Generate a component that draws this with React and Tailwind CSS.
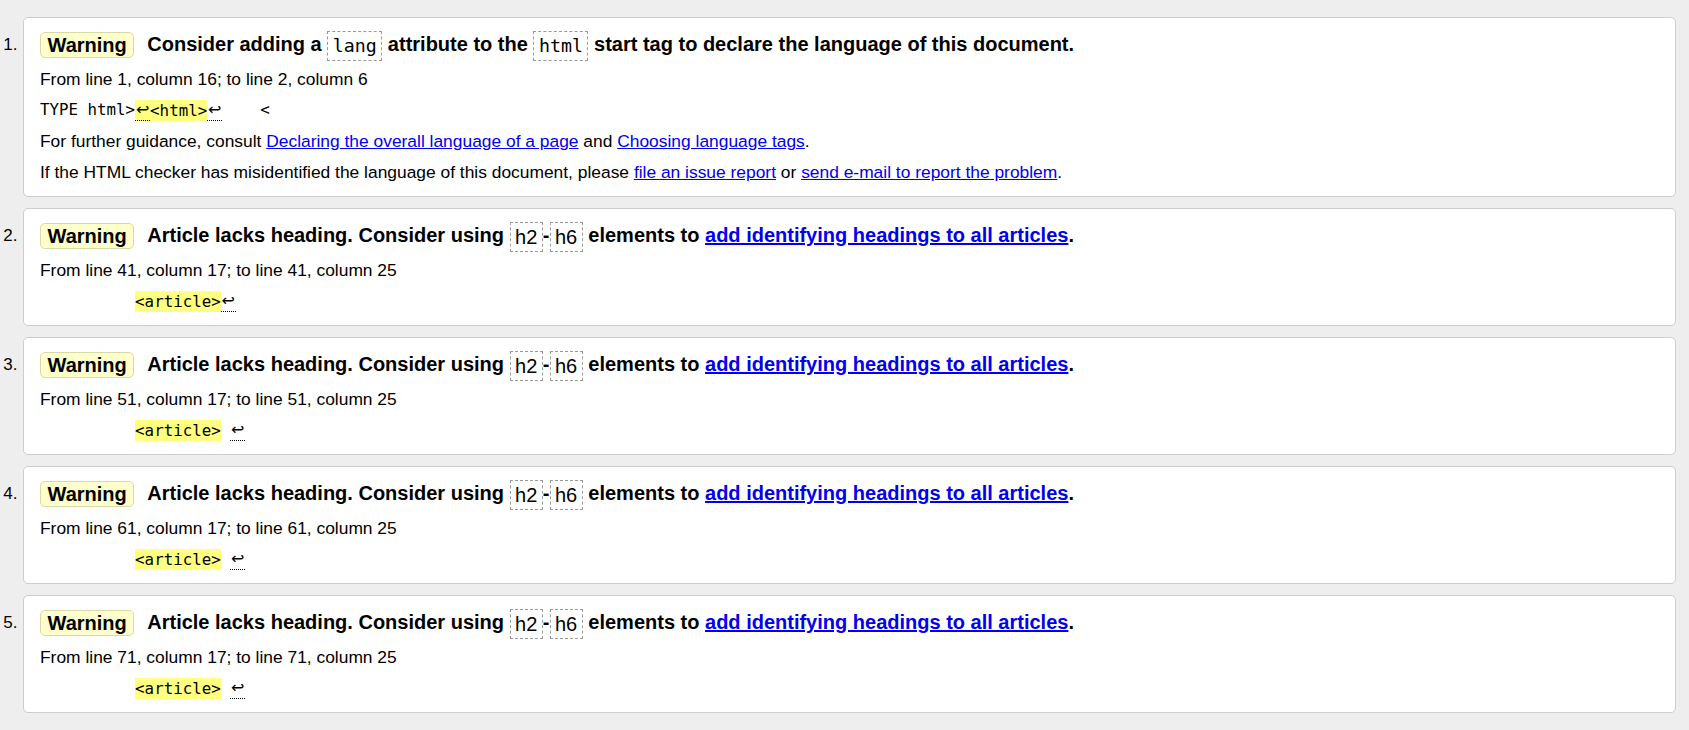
import React from "react";

const MONO = "font-['DejaVu_Sans_Mono',monospace]";

function Badge() {
  return (
    <span className="inline-flex h-[26px] shrink-0 items-center rounded-[5px] border border-[#d9d9a8] bg-[#ffffcc] px-[6.5px] text-[20px] font-bold leading-none text-black">
      Warning
    </span>
  );
}

function Code({ children }) {
  return (
    <span className={`${MONO} inline-block h-[30px] border border-dashed border-[#9a9a9a] px-[4.5px] align-middle text-[18.3px] font-normal leading-[28px]`}>
      {children}
    </span>
  );
}

function SansCode({ children }) {
  return (
    <span className="inline-block h-[30px] border border-dashed border-[#9a9a9a] px-[4.5px] align-middle text-[20px] font-normal leading-[28px]">
      {children}
    </span>
  );
}

function Ret({ hl }) {
  return (
    <span className={`inline-block h-[21px] w-[15px] border-b border-dotted border-black text-center align-middle font-['DejaVu_Sans',sans-serif] text-[16px] leading-[20px] ${hl ? "bg-[#ffff80]" : ""}`}>
      ↩
    </span>
  );
}

function Hl({ children }) {
  return (
    <span className="inline-block h-[21px] bg-[#ffff80] align-middle leading-[21px]">{children}</span>
  );
}

function Card({ n, heading, children }) {
  return (
    <div className="flex">
      <div className="w-[23px] shrink-0 pr-[5.5px] pt-[18px] text-right text-[17px] leading-[20px] text-black">
        {n}.
      </div>
      <div className="flex-1 rounded-[5px] border border-[#cdcdcd] bg-white pb-[8px] pl-[16px] pt-[12px]">
        <div className="flex h-[30px] items-center">
          <Badge />
          <span className="ml-[13px] whitespace-nowrap text-[20px] font-bold leading-[30px] text-black">
            {heading}
          </span>
        </div>
        <div className="mt-[4px] text-[17.4px] text-black">{children}</div>
      </div>
    </div>
  );
}

function ArticleHeading() {
  return (
    <>
      Article lacks heading. Consider using <SansCode>h2</SansCode>-<SansCode>h6</SansCode> elements to{" "}
      <a href="#" className="text-[#0000ee] underline">
        add identifying headings to all articles
      </a>
      .
    </>
  );
}

function ArticleBody({ from, space }) {
  return (
    <>
      <div className="h-[30px] leading-[30px]">
        From line {from}, column 17; to line {from}, column 25
      </div>
      <div className={`${MONO} h-[32px] whitespace-pre text-[15.8px] leading-[32px]`}>
        {"          "}
        <Hl>{"<article>"}</Hl>
        {space ? " " : ""}
        <Ret />
      </div>
    </>
  );
}

export default function App() {
  return (
    <div className="min-h-[730px] bg-[#eeeeee] pb-[17px] pr-[13px] pt-[17px] font-['Liberation_Sans',Arial,sans-serif]">
      <div className="flex flex-col gap-[11px]">
        <Card
          n={1}
          heading={
            <>
              Consider adding a <Code>lang</Code> attribute to the <Code>html</Code> start tag to declare the language of this document.
            </>
          }
        >
          <div className="h-[30px] leading-[30px]">From line 1, column 16; to line 2, column 6</div>
          <div className={`${MONO} h-[32px] whitespace-pre text-[15.8px] leading-[32px]`}>
            {"TYPE html>"}
            <Ret hl />
            <Hl>{"<html>"}</Hl>
            <Ret />
            {"    <"}
          </div>
          <div className="h-[31px] leading-[31px]">
            For further guidance, consult{" "}
            <a href="#" className="text-[#0000ee] underline">Declaring the overall language of a page</a> and{" "}
            <a href="#" className="text-[#0000ee] underline">Choosing language tags</a>.
          </div>
          <div className="h-[31px] leading-[31px]">
            If the HTML checker has misidentified the language of this document, please{" "}
            <a href="#" className="text-[#0000ee] underline">file an issue report</a> or{" "}
            <a href="#" className="text-[#0000ee] underline">send e-mail to report the problem</a>.
          </div>
        </Card>
        <Card n={2} heading={<ArticleHeading />}>
          <ArticleBody from={41} space={false} />
        </Card>
        <Card n={3} heading={<ArticleHeading />}>
          <ArticleBody from={51} space />
        </Card>
        <Card n={4} heading={<ArticleHeading />}>
          <ArticleBody from={61} space />
        </Card>
        <Card n={5} heading={<ArticleHeading />}>
          <ArticleBody from={71} space />
        </Card>
      </div>
    </div>
  );
}
